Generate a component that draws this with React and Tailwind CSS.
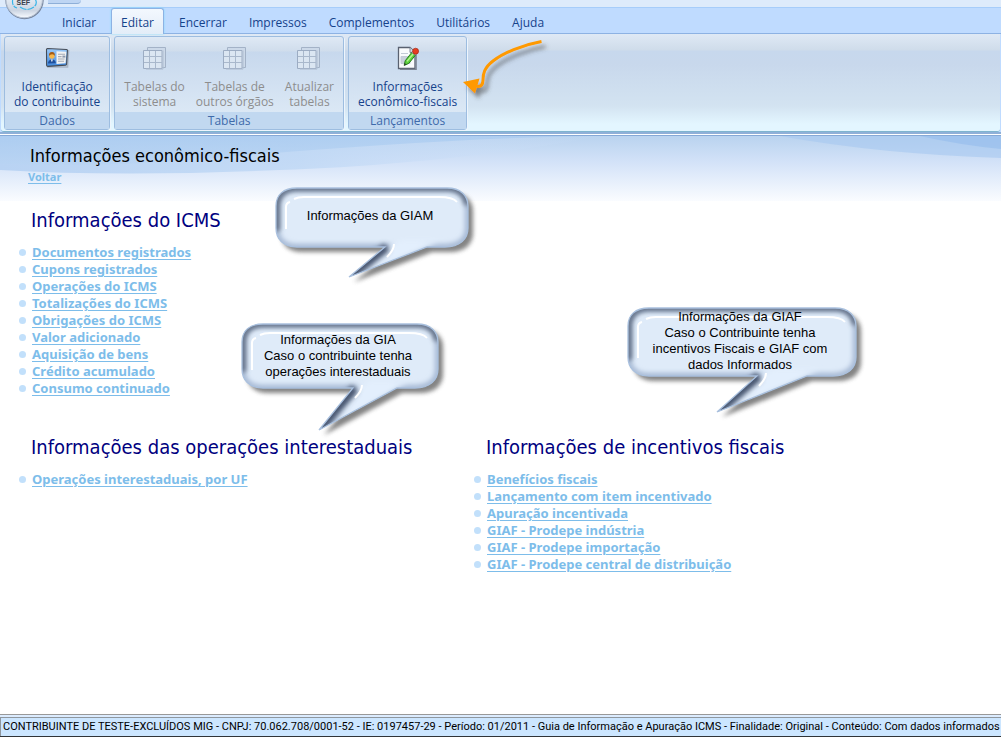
import React from "react";

const TABS = ["Iniciar", "Editar", "Encerrar", "Impressos", "Complementos", "Utilitários", "Ajuda"];

const ICMS = [
  "Documentos registrados",
  "Cupons registrados",
  "Operações do ICMS",
  "Totalizações do ICMS",
  "Obrigações do ICMS",
  "Valor adicionado",
  "Aquisição de bens",
  "Crédito acumulado",
  "Consumo continuado",
];

const INCENTIVOS = [
  "Benefícios fiscais",
  "Lançamento com item incentivado",
  "Apuração incentivada",
  "GIAF - Prodepe indústria",
  "GIAF - Prodepe importação",
  "GIAF - Prodepe central de distribuição",
];

function CardIcon() {
  return (
    <svg width="26" height="24" viewBox="0 0 26 24" aria-hidden="true">
      <defs>
        <linearGradient id="cardBlue" x1="0" y1="0" x2="0" y2="1">
          <stop offset="0" stopColor="#9ccaf8" />
          <stop offset="1" stopColor="#3f87dc" />
        </linearGradient>
      </defs>
      <path d="M3 21 L23.5 21 L24.5 4" fill="none" stroke="#8a93a3" strokeWidth="1.6" opacity=".55" />
      <path d="M2.5 3.5 Q2.5 2.5 3.5 2.5 L22.5 3.5 Q23.5 3.6 23.4 4.6 L22.6 18.2 Q22.5 19 21.6 19.1 L4 20.4 Q2.7 20.4 2.6 19.2 Z" fill="url(#cardBlue)" stroke="#454b55" strokeWidth="1.1" />
      <path d="M12.5 5.3 L22.3 5.8 L21.6 17.2 L12.5 17.9 Z" fill="#f2f2f2" />
      <path d="M14 8.2h7M14 10.6h3.6M14 13h6.6M14 15.2h6" stroke="#a5abb5" strokeWidth="1.1" />
      <path d="M18.4 9.6h3v2h-3z" fill="#8d99ad" />
      <path d="M4 17.5 Q4 13.6 8 13.4 Q11.6 13.6 11.8 17.3 Z" fill="#1f4f9c" />
      <path d="M6.9 13.4h2l-1 2.8z" fill="#fff" />
      <circle cx="7.9" cy="10.1" r="2.7" fill="#f7b64a" />
      <path d="M5 10 Q4.6 6 8 6 Q11.2 6 10.8 10 Q10 8 8 8.2 Q6 8.2 5 10Z" fill="#a65a12" />
    </svg>
  );
}

function TablesIcon() {
  return (
    <svg width="26" height="24" viewBox="0 0 26 24" aria-hidden="true">
      <path d="M5.5 1.5h18v20h-18z" fill="#ccd9e9" stroke="#a3b2c7" />
      <path d="M1.500 4.500h18.500v18h-18.500z" fill="#dbe6f2" stroke="#9cacc3" />
      <path d="M21 4.5v18.6h-17" fill="none" stroke="#b0bfd2" />
      <path d="M7.5 5v17M13.5 5v17M2 10.5h18M2 16.5h18" stroke="#a9b8cc" />
    </svg>
  );
}

function EditIcon() {
  return (
    <svg width="26" height="24" viewBox="0 0 26 24" aria-hidden="true">
      <path d="M3.500 1.500h11.500l5 5v16h-16.500z" fill="#fafbfd" stroke="#596170" strokeWidth="1.3" />
      <path d="M5 23.3h16.2v-15" fill="none" stroke="#7b8491" strokeWidth="1.2" />
      <path d="M15 1.5v5h5" fill="#d7dce5" stroke="#7c8594" />
      <path d="M6 7.5h7M6 10.5h9v7h-9z" fill="#c9cfdb" stroke="#c3cad6" />
      <path d="M9.2 19.4 L10.2 14.8 L16.8 6.4 L20.4 9.2 L13.8 17.4 Z" fill="#5fd13d" stroke="#267d1d" />
      <path d="M12 15.4 L18.3 7.8" stroke="#b4f592" strokeWidth="1.4" />
      <path d="M16.8 6.4 L18.2 4.6 L21.8 7.4 L20.4 9.2Z" fill="#d9dde3" stroke="#6c727d" strokeWidth=".6" />
      <circle cx="20.6" cy="5.2" r="3" fill="#e63d20" stroke="#98210f" strokeWidth=".6" />
      <path d="M9.2 19.4 L9.7 17 L11.4 18.5Z" fill="#333" />
    </svg>
  );
}

function SefOrb() {
  return (
    <svg className="absolute left-1 top-0" width="42" height="20" viewBox="4 0 42 20" role="img" aria-label="SEF">
      <defs>
        <linearGradient id="orb" x1="0" y1="0" x2="0" y2="1">
          <stop offset="0" stopColor="#d9dfe8" />
          <stop offset=".5" stopColor="#e2e9f2" />
          <stop offset=".8" stopColor="#ccd5e2" />
          <stop offset="1" stopColor="#f8fbff" />
        </linearGradient>
      </defs>
      <circle cx="24.5" cy="0" r="19.2" fill="#74839c" />
      <circle cx="24.2" cy="-.4" r="18.2" fill="url(#orb)" stroke="#b8c3d3" />
      <path d="M13 -2 Q11 6 17 8 M20 7 Q27 12 34 7 Q38 3 35 -1" fill="none" stroke="#37b4e8" strokeWidth="1.2" strokeDasharray="7 1" />
      <text x="16.5" y="5" fontFamily="'Liberation Sans', Arial, sans-serif" fontWeight="700" fontSize="7" fill="#39404c">SEF</text>
    </svg>
  );
}

function Group({ caption, children }) {
  return (
    <section className="flex flex-col rounded-[3px] border border-[#9dbde0] bg-[linear-gradient(#dfe9f5,#d0ddec_14px,#c7d8ed_15px,#dbe8f5_76px)] shadow-[1px_1px_0_#edf5fd]">
      <div className="flex h-[75px] gap-[11px] px-[9px]">{children}</div>
      <h2 className="flex h-[17px] items-center justify-center bg-[#c1d8f0] text-[#3e6aaa]">{caption}</h2>
    </section>
  );
}

function Tool({ icon, lines, disabled }) {
  const tone = disabled ? "text-[#8d8d8d]" : "text-[#15428b]";
  return (
    <button type="button" disabled={disabled} className={`flex flex-col items-center gap-[9px] pt-[9px] leading-[15px] ${tone}`}>
      {icon}
      <span className="whitespace-nowrap">
        {lines[0]}
        <br />
        {lines[1]}
      </span>
    </button>
  );
}

function LinkSection({ title, links }) {
  return (
    <section>
      <h2 className="ml-[31px] whitespace-nowrap font-['DejaVu_Sans_Condensed','Noto_Sans',sans-serif] text-[20px] leading-[26px] text-[#000080]">{title}</h2>
      <ul className="mt-[11px] ml-[19px]">
        {links.map((text) => (
          <li key={text} className="flex h-[17px] items-center gap-[6px]">
            <span className="size-[7px] rounded-full bg-[#c2e0fb]" />
            <a href="#" className="whitespace-nowrap text-[13px] font-bold leading-[17px] text-[#7dbdea] underline underline-offset-2">
              {text}
            </a>
          </li>
        ))}
      </ul>
    </section>
  );
}

function Callout({ id, w, h, tail, lines, place, textClass }) {
  const [left, tipX, tipY, right] = tail;
  const body = `M22 1 H${w - 22} C${w - 8} 1 ${w - 1} 9 ${w - 1} 19 V${h - 19} C${w - 1} ${h - 8} ${w - 9} ${h} ${w - 24} ${h} H${right} L${tipX} ${tipY} L${left} ${h} H22 C8 ${h} 1 ${h - 8} 1 ${h - 19} V19 C1 8 8 1 22 1 Z`;
  return (
    <aside className={`absolute ${place}`}>
      <svg width={w + 12} height={tipY + 10} aria-hidden="true">
        <defs>
          <clipPath id={`${id}-clip`}>
            <path d={body} />
          </clipPath>
          <filter id={`${id}-soft`} x="-20%" y="-20%" width="140%" height="140%">
            <feGaussianBlur stdDeviation="2" />
          </filter>
          <filter id={`${id}-edge`} filterUnits="userSpaceOnUse" x="-20" y="-20" width={w + 40} height={tipY + 40}>
            <feGaussianBlur stdDeviation="2.5" />
          </filter>
        </defs>
        <path d={body} transform="translate(5 5)" fill="#505050" opacity=".7" filter={`url(#${id}-soft)`} />
        <path d={body} fill="#dfebf9" />
        <g clipPath={`url(#${id}-clip)`}>
          <path d={body} fill="none" stroke="#a3b6d2" strokeWidth="6" filter={`url(#${id}-edge)`} />
          <path d={`M2 ${h - 16} V19 C2 8 10 1 22 1 H${w - 22} C${w - 10} 1 ${w - 2} 8 ${w - 2} 18`} fill="none" stroke="#5d6a80" strokeWidth="6" filter={`url(#${id}-edge)`} />
          <path d={`M${left + 16} ${h - 7} L${right + 12} ${h - 7} L${right} ${h} L${tipX + 10} ${tipY} L${tipX + 12} ${tipY - 6} Z`} fill="#e3effd" filter={`url(#${id}-edge)`} />
          <path d={`M${left + 2} ${h} L${tipX} ${tipY}`} stroke="#47556e" strokeWidth="9" filter={`url(#${id}-edge)`} />
        </g>
        <path d={body} fill="none" stroke="#a9c0de" strokeWidth="1.3" />
        <path d={`M11 ${h - 18} V20 Q11 16 15 15 M19 12 Q23 10 29 10 H${w - 30} Q${w - 16} 10 ${w - 12} 15`} fill="none" stroke="#fff" strokeWidth="2" />
        <path d={`M${left + 9} ${h - 3} Q${left + 9} ${h + 3} ${left + 2} ${h + 10}`} fill="none" stroke="#fff" strokeWidth="2" />
      </svg>
      <p className={`absolute inset-x-0 pr-4 text-center font-['Liberation_Sans',Arial,sans-serif] text-[13px] leading-4 text-black ${textClass}`}>
        {lines.map((line) => (
          <span key={line} className="block whitespace-nowrap">{line}</span>
        ))}
      </p>
    </aside>
  );
}

export default function App() {
  return (
    <div className="relative flex min-h-screen flex-col overflow-x-hidden bg-white font-['Noto_Sans',Tahoma,sans-serif]">
      <header className="relative bg-[#bfdbff] font-['Open_Sans','Noto_Sans',sans-serif] text-[12px]">
        <div className="h-[8px] border-b border-[#a7cdfa] bg-[#deebfb] pl-12">
          <div className="h-[4px] w-[33px] rounded-br-xl border-b border-[#8eafd8] bg-[#bed5f3]" />
        </div>
        <SefOrb />
        <nav className="flex h-[26px] items-end border-b border-[#8db2e3] pl-[51px]">
          {TABS.map((tab) => (
            <a
              key={tab}
              href="#"
              className={
                tab === "Editar"
                  ? "-mb-px mx-1 flex h-[26px] items-center rounded-t-[3px] border border-b-0 border-[#8db2e3] bg-linear-to-b from-[#f3f8fe] to-[#e3edf8] px-[9px] pt-[3px] text-[#15428b] shadow-[0_0_2px_#78dcff]"
                  : "flex h-[24px] items-center px-[11px] pt-[3px] text-[#15428b]"
              }
            >
              {tab}
            </a>
          ))}
        </nav>
        <div className="mx-px flex h-[98px] gap-1 rounded-b-[3px] border-b border-[#7fb5cf] bg-[linear-gradient(#dfe9f5,#cfdcea_16px,#c7d8ed_17px,#c8d8ec_30px,#d3e3f1_72px,#e3f6ff_90px)] px-[3px] pt-[2px] pb-px">
          <Group caption="Dados">
            <Tool icon={<CardIcon />} lines={["Identificação", "do contribuinte"]} />
          </Group>
          <Group caption="Tabelas">
            <Tool icon={<TablesIcon />} lines={["Tabelas do", "sistema"]} disabled />
            <Tool icon={<TablesIcon />} lines={["Tabelas de", "outros órgãos"]} disabled />
            <Tool icon={<TablesIcon />} lines={["Atualizar", "tabelas"]} disabled />
          </Group>
          <Group caption="Lançamentos">
            <Tool icon={<EditIcon />} lines={["Informações", "econômico-fiscais"]} />
          </Group>
        </div>
        <div className="h-[4px] border-t-2 border-b border-t-[#8fb0d8] border-b-[#86a9d6] bg-white" />
      </header>

      <svg className="absolute left-[458px] top-[34px]" width="95" height="70" viewBox="458 34 95 70" aria-hidden="true">
        <defs>
          <filter id="arrow-shadow" x="-20%" y="-20%" width="150%" height="150%">
            <feDropShadow dx="4" dy="5" stdDeviation="2" floodColor="#444" floodOpacity=".6" />
          </filter>
        </defs>
        <g filter="url(#arrow-shadow)">
          <path d="M541.5 41.5 C522 45 503 53 493 61 C484 68 483 74 483 80 Q483 87 477 86.500" fill="none" stroke="#ff9900" strokeWidth="3" />
          <path d="M463 82 L479.500 78.500 L475 93.500 Z" fill="#ff9900" />
        </g>
      </svg>

      <main className="flex-1">
        <div className="relative h-[65px] bg-[linear-gradient(#b9d3ef,#d3e2f8_26px,#fafcff)]">
          <svg className="absolute inset-0 h-full w-full" viewBox="0 0 1001 65" preserveAspectRatio="none" aria-hidden="true">
            <defs>
              <linearGradient id="wave" x1="0" y1="0" x2="0" y2="1">
                <stop offset="0" stopColor="#a9cbf0" />
                <stop offset="1" stopColor="#b9d4f3" />
              </linearGradient>
              <linearGradient id="wave-low" x1="0" y1="0" x2="1" y2="0">
                <stop offset="0" stopColor="#b9d3f3" />
                <stop offset=".5" stopColor="#bfd8f5" stopOpacity=".8" />
                <stop offset="1" stopColor="#cfe0f8" stopOpacity="0" />
              </linearGradient>
            </defs>
            <path d="M0 0 H600 C520 16 400 30 280 34 Q120 41 0 34 Z" fill="url(#wave-low)" />
            <path d="M0 0 H590 C460 2 330 12 190 24 Q90 32 0 28 Z" fill="url(#wave)" opacity=".75" />
            <path d="M780 0 Q880 18 1001 22 V0 Z" fill="#a6c8f0" opacity=".6" />
            <path d="M920 0 Q960 9 1001 13 V0 Z" fill="#94bcec" opacity=".6" />
          </svg>
          <h1 className="relative pt-[7px] pl-[30px] font-['DejaVu_Sans_Condensed','Noto_Sans',sans-serif] text-[18px] leading-[26px] text-black">Informações econômico-fiscais</h1>
          <a href="#" className="relative ml-[28px] block w-fit text-[11px] font-bold leading-4 text-[#7dbdea] underline underline-offset-2">Voltar</a>
        </div>
        <div className="pt-[6px]">
          <LinkSection title="Informações do ICMS" links={ICMS} />
          <div className="mt-[37px] grid grid-cols-[455px_1fr]">
            <LinkSection title="Informações das operações interestaduais" links={["Operações interestaduais, por UF"]} />
            <LinkSection title="Informações de incentivos fiscais" links={INCENTIVOS} />
          </div>
        </div>
      </main>

      <Callout id="giam" w={194} h={60} tail={[110, 74, 90, 152]} place="left-[275px] top-[187px]" textClass="top-[21px]" lines={["Informações da GIAM"]} />
      <Callout id="gia" w={198} h={65} tail={[112, 78, 107, 156]} place="left-[241px] top-[323px]" textClass="top-[9px]" lines={["Informações da GIA", "Caso o contribuinte tenha", "operações interestaduais"]} />
      <Callout id="giaf" w={230} h={69} tail={[130, 90, 105, 180]} place="left-[627px] top-[307px]" textClass="top-[2px]" lines={["Informações da GIAF", "Caso o Contribuinte tenha", "incentivos Fiscais e GIAF com", "dados Informados"]} />

      <footer className="border-t border-[#999] bg-[#dcecff] pt-[2px]">
        <p className="h-[19px] whitespace-nowrap border-t border-l border-[#8f979f] bg-[#cce6ff] pl-[2px] font-[Roboto,'Noto_Sans',sans-serif] text-[11px] leading-[18px] text-black">
          CONTRIBUINTE DE TESTE-EXCLUÍDOS MIG - CNPJ: 70.062.708/0001-52 - IE: 0197457-29 - Período: 01/2011 - Guia de Informação e Apuração ICMS - Finalidade: Original - Conteúdo: Com dados informados
        </p>
        <div className="h-px bg-[#303438]" />
      </footer>
    </div>
  );
}
